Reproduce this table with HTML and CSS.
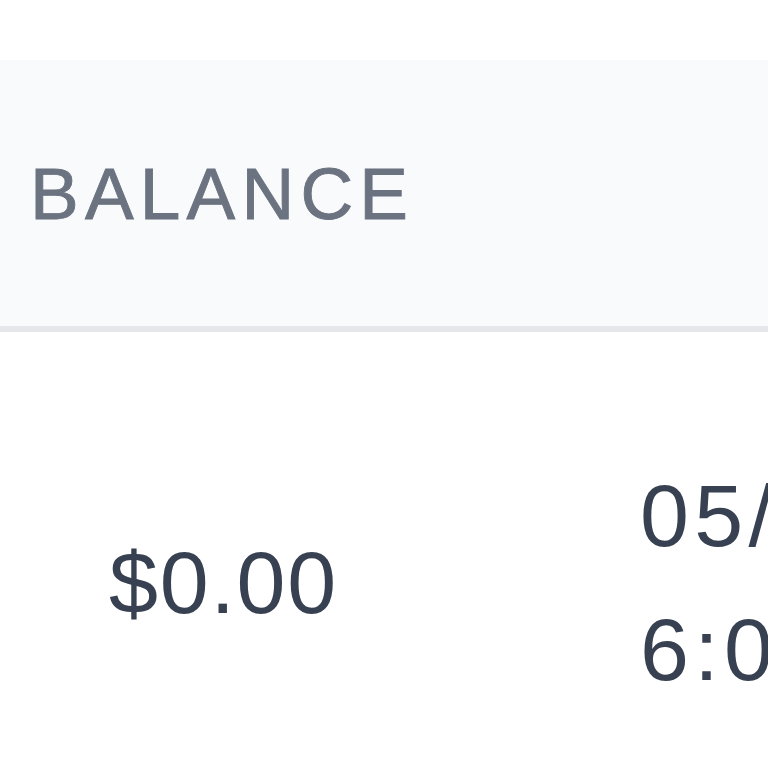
FILE: index.html
```html
<!DOCTYPE html>
<html lang="en">
<head>
<meta charset="utf-8">
<title>Balance</title>
<link rel="stylesheet" href="styles.css">
</head>
<body>
  <div class="wrap">
    <table class="ledger">
      <thead>
        <tr>
          <th class="col-balance">Balance</th>
          <th class="col-date"></th>
        </tr>
      </thead>
      <tbody>
        <tr>
          <td class="cell-balance">$0.00</td>
          <td class="cell-date"><span class="line">05/14/2024</span><span class="line">6:00 PM</span></td>
        </tr>
      </tbody>
    </table>
  </div>
</body>
</html>
```

FILE: styles.css
```css
html, body {
  margin: 0;
  padding: 0;
  background: #ffffff;
  overflow: hidden;
  width: 768px;
  height: 768px;
}

.wrap {
  padding-top: 60px;
}

.ledger {
  border-collapse: collapse;
  width: 1400px;
  table-layout: fixed;
  font-family: "Liberation Sans", Arial, sans-serif;
}

.col-balance {
  width: 570px;
}

.ledger thead tr {
  background: #f9fafb;
  border-bottom: 6px solid #e5e7eb;
}

.ledger th {
  height: 266px;
  padding: 0 0 0 30px;
  text-align: left;
  vertical-align: middle;
  font-size: 73px;
  font-weight: 400;
  line-height: 1;
  letter-spacing: 0.085em;
  text-transform: uppercase;
  color: #6b7280;
  -webkit-text-stroke: 0.9px #6b7280;
}

.ledger td {
  vertical-align: middle;
  font-size: 88px;
  line-height: 134px;
  color: #374151;
  padding: 117px 0;
}

.cell-balance {
  padding-left: 109px !important;
  letter-spacing: 0.02em;
}

.cell-date {
  padding-left: 40px !important;
  letter-spacing: 0.06em;
}

.cell-date .line {
  display: block;
  white-space: nowrap;
}
```
